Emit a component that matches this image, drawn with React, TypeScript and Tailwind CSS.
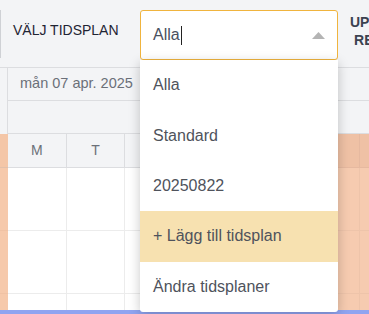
const days = ['M', 'T', 'O', 'T', 'F', 'L', 'S'];
const options = ['Alla', 'Standard', '20250822', '+ Lägg till tidsplan', 'Ändra tidsplaner'];

function ScheduleSelect() {
  return (
    <div className="relative mt-[10px] h-[50px] w-[198px] shrink-0">
      <div className="flex h-full items-center rounded-[3px] border border-[#f0b43e] bg-white pl-[12px] pr-[12px]">
        <span className="text-[16px] text-[#4a5060]">Alla</span>
        <span className="ml-px h-[19px] w-px bg-[#222]" />
        <svg className="ml-auto" width="13" height="7" viewBox="0 0 13 7">
          <polygon points="6.5,0 13,7 0,7" fill="#b4b4b4" />
        </svg>
      </div>
      <ul className="absolute left-0 top-[50px] z-10 w-full overflow-hidden rounded-b-[3px] bg-white shadow-[0_3px_12px_rgba(0,0,0,0.22)]">
        {options.map((o, i) => (
          <li
            key={o}
            className={
              'flex h-[50.4px] items-center px-[13px] text-[16px] text-[#4f535c] ' +
              (i === 3 ? 'bg-[#f7e1b0]' : '')
            }
          >
            {o}
          </li>
        ))}
      </ul>
    </div>
  );
}

export default function App() {
  return (
    <div className="relative h-[314px] w-[369px] overflow-hidden bg-white font-['Liberation_Sans',Arial,sans-serif]">
      {/* toolbar */}
      <header className="flex h-[68px] items-start border-b border-[#dcdde0] bg-[#f3f4f6]">
        <div className="mt-[10px] h-[48px] w-px shrink-0 bg-[#cfd1d5]" />
        <div className="ml-[12px] mt-[19px] w-[127px] shrink-0 text-[14px] leading-[22px] text-[#1f2433]">
          VÄLJ TIDSPLAN
        </div>
        <ScheduleSelect />
        <div className="ml-[10px] mt-[13px] w-[90px] shrink-0 text-center text-[14px] font-bold leading-[18px] text-[#3b4250]">
          UPPDATERA
          <br />
          RESURSER
        </div>
      </header>

      {/* calendar */}
      <div className="grid grid-cols-[8px_repeat(7,58.7px)]">
        <div className="row-span-2 border-r border-[#dcdde0] bg-[#f3f4f6]" />
        <div className="col-span-7 flex h-[33px] items-center border-b border-[#dcdde0] bg-[#f3f4f6] pl-[12px] text-[14.5px] text-[#6b7079]">
          mån 07 apr. 2025
        </div>
        <div className="col-span-7 h-[33px] border-b border-[#dcdde0] bg-[#f3f4f6]" />

        <div className="h-[34px] border-b border-[#e2c0aa] bg-[#f4c6a7]" />
        {days.map((d, i) => (
          <div
            key={i}
            className={
              'flex h-[34px] items-center justify-center border-b border-r text-[14px] ' +
              (i >= 5
                ? 'border-[#e6b9a0] bg-[#efc1a5] text-[#6b7079]'
                : 'border-[#dcdde0] bg-[#f3f4f6] text-[#6b7079]')
            }
          >
            {d}
          </div>
        ))}

        {[0, 1, 2].map((r) => (
          <div key={r} className="contents">
            <div className="h-[63px] border-b border-[#f0c2a4] bg-[#f6c9ab]" />
            {days.map((_, i) => (
              <div
                key={i}
                className={
                  'h-[63px] border-b border-r ' +
                  (i >= 5 ? 'border-[#eec4aa] bg-[#f6cbb0]' : 'border-[#ececec] bg-white')
                }
              />
            ))}
          </div>
        ))}
      </div>

      <div className="absolute bottom-0 left-0 h-[4px] w-full bg-[#90a4f1]" />
    </div>
  );
}
